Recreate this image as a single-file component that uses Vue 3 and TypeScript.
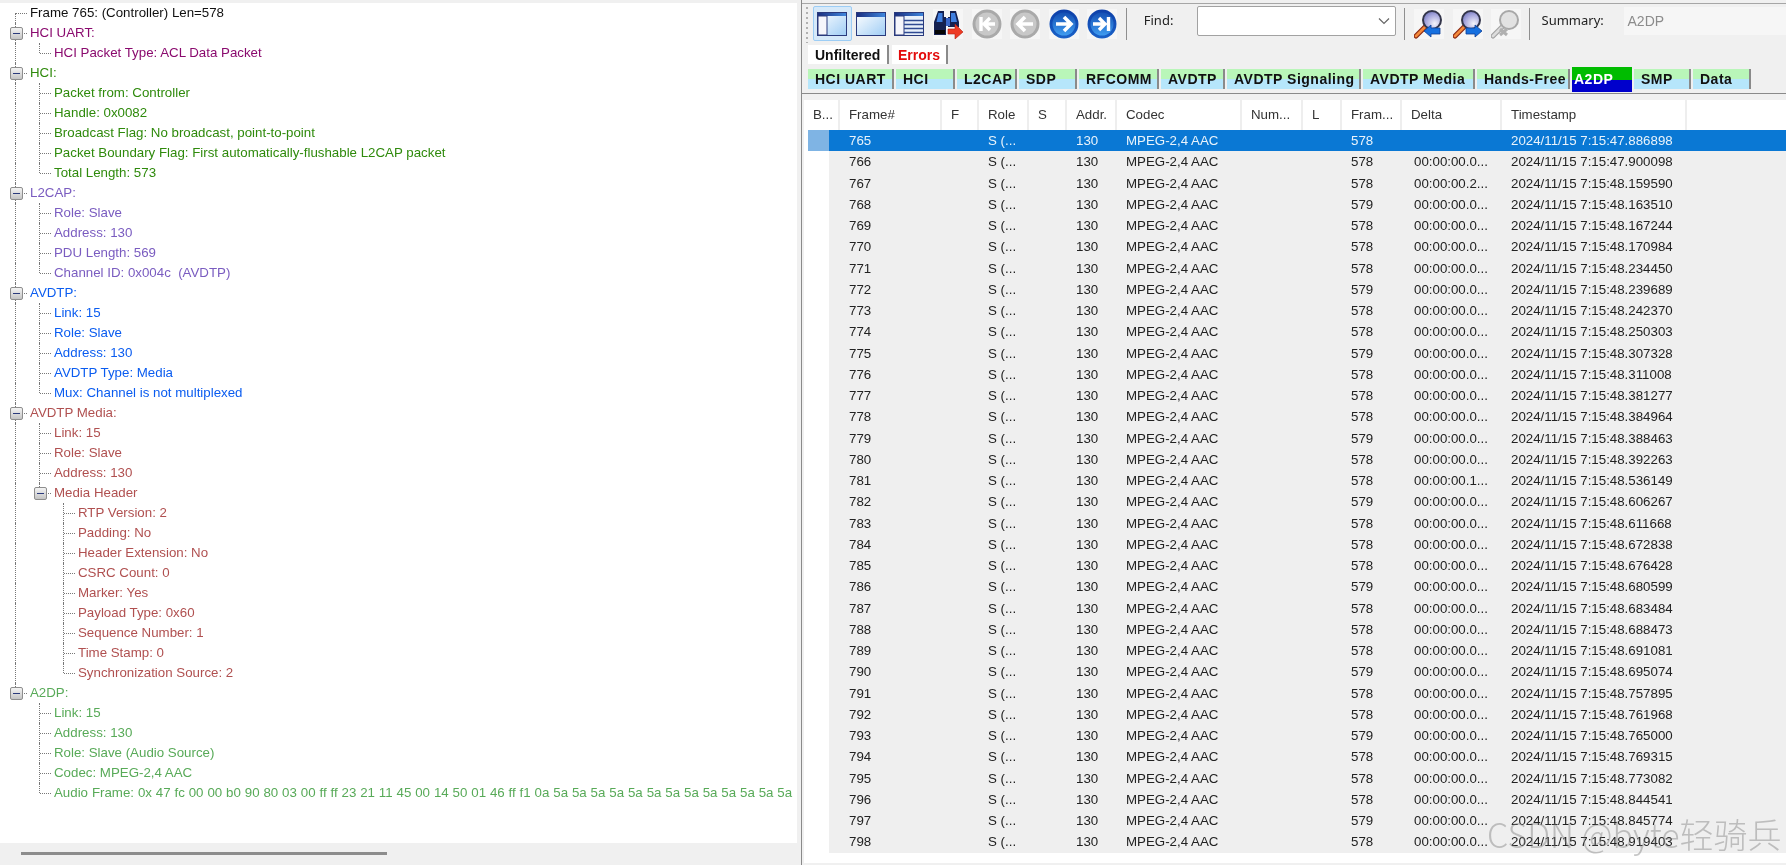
<script setup lang="ts">
interface TreeNode { t: string; children?: TreeNode[] }
interface Section { color: string; node: TreeNode }
interface Flat { t: string; color: string; guides: string[]; box: boolean }

const leaf = (...items: string[]): TreeNode[] => items.map((t) => ({ t }))

const sections: Section[] = [
  { color: '#111111', node: { t: 'Frame 765: (Controller) Len=578' } },
  { color: '#8a0a6e', node: { t: 'HCI UART:', children: leaf('HCI Packet Type: ACL Data Packet') } },
  { color: '#2f8a0c', node: { t: 'HCI:', children: leaf('Packet from: Controller', 'Handle: 0x0082', 'Broadcast Flag: No broadcast, point-to-point', 'Packet Boundary Flag: First automatically-flushable L2CAP packet', 'Total Length: 573') } },
  { color: '#7a5cc0', node: { t: 'L2CAP:', children: leaf('Role: Slave', 'Address: 130', 'PDU Length: 569', 'Channel ID: 0x004c  (AVDTP)') } },
  { color: '#0a5cf0', node: { t: 'AVDTP:', children: leaf('Link: 15', 'Role: Slave', 'Address: 130', 'AVDTP Type: Media', 'Mux: Channel is not multiplexed') } },
  { color: '#b05050', node: { t: 'AVDTP Media:', children: [
    ...leaf('Link: 15', 'Role: Slave', 'Address: 130'),
    { t: 'Media Header', children: leaf('RTP Version: 2', 'Padding: No', 'Header Extension: No', 'CSRC Count: 0', 'Marker: Yes', 'Payload Type: 0x60', 'Sequence Number: 1', 'Time Stamp: 0', 'Synchronization Source: 2') },
  ] } },
  { color: '#58aa58', node: { t: 'A2DP:', children: leaf('Link: 15', 'Address: 130', 'Role: Slave (Audio Source)', 'Codec: MPEG-2,4 AAC', 'Audio Frame: 0x 47 fc 00 00 b0 90 80 03 00 ff ff 23 21 11 45 00 14 50 01 46 ff f1 0a 5a 5a 5a 5a 5a 5a 5a 5a 5a 5a 5a 5a 5a') } },
]

const rows: Flat[] = []
function walk(n: TreeNode, color: string, prefix: boolean[], own: string) {
  rows.push({ t: n.t, color, guides: [...prefix.map((m) => (m ? 'pass' : 'none')), own], box: !!n.children })
  const kids = n.children ?? []
  const more = own === 'tee' || own === 'start'
  kids.forEach((k, i) => walk(k, color, [...prefix, more], i === kids.length - 1 ? 'ell' : 'tee'))
}
sections.forEach((s, i) => walk(s.node, s.color, [], i === 0 ? 'start' : i === sections.length - 1 ? 'ell' : 'tee'))

const topTabs = [
  { label: 'HCI UART', w: 86 }, { label: 'HCI', w: 59 }, { label: 'L2CAP', w: 60 }, { label: 'SDP', w: 58 },
  { label: 'RFCOMM', w: 80 }, { label: 'AVDTP', w: 64 }, { label: 'AVDTP Signaling', w: 134 }, { label: 'AVDTP Media', w: 112 },
  { label: 'Hands-Free', w: 93 }, { label: 'A2DP', w: 60, active: true }, { label: 'SMP', w: 57 }, { label: 'Data', w: 58 },
]

const cols = [
  { label: 'B...', w: 36 }, { label: 'Frame#', w: 102 }, { label: 'F', w: 37 }, { label: 'Role', w: 50 }, { label: 'S', w: 38 },
  { label: 'Addr.', w: 50 }, { label: 'Codec', w: 125 }, { label: 'Num...', w: 61 }, { label: 'L', w: 39 }, { label: 'Fram...', w: 60 },
  { label: 'Delta', w: 100 }, { label: 'Timestamp', w: 185 },
]

const raw: [number, string, string][] = [
  [578, '', '47.886898'], [578, '0', '47.900098'], [578, '2', '48.159590'], [579, '0', '48.163510'], [578, '0', '48.167244'],
  [578, '0', '48.170984'], [578, '0', '48.234450'], [579, '0', '48.239689'], [578, '0', '48.242370'], [578, '0', '48.250303'],
  [579, '0', '48.307328'], [578, '0', '48.311008'], [578, '0', '48.381277'], [578, '0', '48.384964'], [579, '0', '48.388463'],
  [578, '0', '48.392263'], [578, '1', '48.536149'], [579, '0', '48.606267'], [578, '0', '48.611668'], [578, '0', '48.672838'],
  [578, '0', '48.676428'], [579, '0', '48.680599'], [578, '0', '48.683484'], [578, '0', '48.688473'], [578, '0', '48.691081'],
  [579, '0', '48.695074'], [578, '0', '48.757895'], [578, '0', '48.761968'], [579, '0', '48.765000'], [578, '0', '48.769315'],
  [578, '0', '48.773082'], [578, '0', '48.844541'], [579, '0', '48.845774'], [578, '0', '48.919403'],
]
const frames = raw.map((r, i) => ({
  frame: 765 + i,
  len: r[0],
  delta: r[1] ? `00:00:00.${r[1]}...` : '',
  stamp: `2024/11/15 7:15:${r[2]}`,
}))
</script>

<template>
  <div class="app">
    <section class="left">
      <div class="tree">
        <div v-for="(r, i) in rows" :key="i" class="node" :style="{ color: r.color }">
          <span v-for="(g, j) in r.guides" :key="j" class="guide" :class="g">
            <span v-if="r.box && j === r.guides.length - 1" class="box"></span>
          </span>
          <span class="label" :class="{ hex: r.t.startsWith('Audio Frame') }">{{ r.t }}</span>
        </div>
      </div>
      <div class="hscroll"><div class="thumb"></div></div>
    </section>
    <div class="divider"></div>
    <section class="right">
      <div class="toolbar">
        <div class="grip"></div>
        <button class="tb on">
          <svg width="30" height="24" viewBox="0 0 30 24">
            <defs>
              <linearGradient id="pane" x1="0" y1="0" x2="1" y2="1"><stop offset="0" stop-color="#ffffff"/><stop offset="1" stop-color="#9fcdf5"/></linearGradient>
              <linearGradient id="bar" x1="0" y1="0" x2="1" y2="0"><stop offset="0" stop-color="#1a2f80"/><stop offset="1" stop-color="#3f86dc"/></linearGradient>
            </defs>
            <rect x="0.5" y="0.5" width="29" height="23" fill="url(#pane)" stroke="#2a3a7c"/>
            <rect x="1" y="1" width="28" height="3" fill="url(#bar)"/>
            <rect x="1" y="4" width="9" height="19" fill="#f6f6fb" stroke="#2a3a7c"/>
          </svg>
        </button>
        <button class="tb">
          <svg width="30" height="24" viewBox="0 0 30 24">
            <rect x="0.5" y="0.5" width="29" height="23" fill="url(#pane)" stroke="#2a3a7c"/>
            <rect x="1" y="1" width="28" height="4" fill="url(#bar)"/>
          </svg>
        </button>
        <button class="tb">
          <svg width="30" height="24" viewBox="0 0 30 24">
            <rect x="0.5" y="0.5" width="29" height="23" fill="#e8f0fa" stroke="#2a3a7c"/>
            <rect x="1" y="1" width="28" height="3" fill="url(#bar)"/>
            <rect x="1" y="4" width="9" height="19" fill="#f6f6fb" stroke="#2a3a7c"/>
            <path d="M10 8.5H29M10 12.5H29M10 16.5H29M10 20.5H29" stroke="#2f4a92" stroke-width="1.6"/>
          </svg>
        </button>
        <button class="tb">
          <svg class="tile" width="30" height="30" viewBox="0 0 30 30">
            <path d="M5 2h6v6h2v18H1V13z" fill="#15204f"/>
            <path d="M15 8h2V2h6l3 11v5H15z" fill="#15204f"/>
            <path d="M5.5 4h4v9h-6zM18 4h4l2 9h-6z" fill="#3f7fe0"/>
            <rect x="2" y="21" width="10" height="4" fill="#050505"/>
            <rect x="13" y="9" width="4" height="8" fill="#3a66c8"/>
            <path d="M15 20h7v-5l8 8-8 7v-5h-7z" fill="#ee3b24" stroke="#b02010" stroke-width=".6"/>
          </svg>
        </button>
        <button class="tb">
          <svg class="tile" width="30" height="30" viewBox="0 0 30 30">
            <circle cx="15" cy="15" r="14.5" fill="#a9a9a9"/><circle cx="15" cy="15" r="11.5" fill="#c8c8c8"/>
            <path d="M9 8v14M23 15H13M18 9l-6 6 6 6" fill="none" stroke="#fff" stroke-width="3.4"/>
          </svg>
        </button>
        <button class="tb">
          <svg class="tile" width="30" height="30" viewBox="0 0 30 30">
            <circle cx="15" cy="15" r="14.5" fill="#a9a9a9"/><circle cx="15" cy="15" r="11.5" fill="#c8c8c8"/>
            <path d="M23 15H9M15 8l-7 7 7 7" fill="none" stroke="#fff" stroke-width="3.6"/>
          </svg>
        </button>
        <button class="tb">
          <svg class="tile" width="30" height="30" viewBox="0 0 30 30">
            <defs>
              <linearGradient id="ring" x1="0" y1="0" x2="0" y2="1"><stop offset="0" stop-color="#0d3fa8"/><stop offset="1" stop-color="#1a62c8"/></linearGradient>
              <linearGradient id="core" x1="0" y1="0" x2="0" y2="1"><stop offset="0" stop-color="#1450b4"/><stop offset="1" stop-color="#3f9cf0"/></linearGradient>
            </defs>
            <circle cx="15" cy="15" r="14.5" fill="url(#ring)"/><circle cx="15" cy="15" r="11.5" fill="url(#core)"/>
            <path d="M7 15h14M15 8l7 7-7 7" fill="none" stroke="#fff" stroke-width="3.6"/>
          </svg>
        </button>
        <button class="tb">
          <svg class="tile" width="30" height="30" viewBox="0 0 30 30">
            <circle cx="15" cy="15" r="14.5" fill="url(#ring)"/><circle cx="15" cy="15" r="11.5" fill="url(#core)"/>
            <path d="M21.5 8v14M6 15h11M12 9l6 6-6 6" fill="none" stroke="#fff" stroke-width="3.4"/>
          </svg>
        </button>
        <div class="sep first"></div>
        <span class="tlabel find">Find:</span>
        <div class="combo">
          <svg width="12" height="8" viewBox="0 0 12 8"><path d="M1 1.5l5 5 5-5" fill="none" stroke="#666" stroke-width="1.2"/></svg>
        </div>
        <div class="sep second"></div>
        <button class="tb">
          <svg class="tile" width="30" height="30" viewBox="0 0 30 30">
            <defs>
              <radialGradient id="lens" cx=".65" cy=".7" r=".8"><stop offset="0" stop-color="#f4f4fb"/><stop offset=".6" stop-color="#a8a8de"/><stop offset="1" stop-color="#6c70b8"/></radialGradient>
            </defs>
            <path d="M12 17L2 27" stroke="#8c2a14" stroke-width="5" stroke-linecap="round"/>
            <path d="M12 17L2 27" stroke="#f48a3c" stroke-width="2.6" stroke-linecap="round"/>
            <circle cx="18" cy="11" r="9" fill="url(#lens)" stroke="#33354a" stroke-width="2"/>
            <path d="M10 22l7-6v3h9v6h-9v3z" fill="#1670e0" stroke="#0c3e96" stroke-width=".8"/>
          </svg>
        </button>
        <button class="tb">
          <svg class="tile" width="30" height="30" viewBox="0 0 30 30">
            <path d="M12 17L2 27" stroke="#8c2a14" stroke-width="5" stroke-linecap="round"/>
            <path d="M12 17L2 27" stroke="#f48a3c" stroke-width="2.6" stroke-linecap="round"/>
            <circle cx="18" cy="11" r="9" fill="url(#lens)" stroke="#33354a" stroke-width="2"/>
            <path d="M29 22l-7-6v3h-9v6h9v3z" fill="#1670e0" stroke="#0c3e96" stroke-width=".8"/>
          </svg>
        </button>
        <button class="tb">
          <svg class="tile" width="30" height="30" viewBox="0 0 30 30">
            <path d="M12 17L2 27" stroke="#a4a4a4" stroke-width="5" stroke-linecap="round"/>
            <path d="M12 17L2 27" stroke="#dcdcdc" stroke-width="2.6" stroke-linecap="round"/>
            <circle cx="18" cy="11" r="9" fill="#e2e2e2" stroke="#a8a8a8" stroke-width="2"/>
            <path d="M9 20l7 6M16 20l-7 6" stroke="#b0b0b0" stroke-width="3"/>
          </svg>
        </button>
        <div class="sep third"></div>
        <span class="tlabel summary">Summary:</span>
        <div class="sumbox">A2DP</div>
      </div>

      <div class="filters">
        <div class="ftab">Unfiltered</div>
        <div class="ftab err">Errors</div>
      </div>

      <div class="ptabs">
        <div v-for="t in topTabs" :key="t.label" class="ptab" :class="{ active: t.active }" :style="{ width: t.w + 'px' }">{{ t.label }}</div>
      </div>

      <div class="grid">
        <div class="head">
          <div v-for="c in cols" :key="c.label" class="hcell" :style="{ width: c.w + 'px' }">{{ c.label }}</div>
        </div>
        <div v-for="(f, i) in frames" :key="f.frame" class="row" :class="{ sel: i === 0 }">
          <div class="marker"></div>
          <div class="cells">
            <span class="c frame">{{ f.frame }}</span>
            <span class="c cf"></span>
            <span class="c role">S (...</span>
            <span class="c cs"></span>
            <span class="c addr">130</span>
            <span class="c codec">MPEG-2,4 AAC</span>
            <span class="c num"></span>
            <span class="c cl"></span>
            <span class="c flen">{{ f.len }}</span>
            <span class="c delta">{{ f.delta }}</span>
            <span class="c stamp">{{ f.stamp }}</span>
          </div>
        </div>
      </div>
    </section>
    <div class="watermark">CSDN @byte轻骑兵</div>
  </div>
</template>

<style>
html, body { margin: 0; background: #f0f0f0; overflow: hidden; }
</style>

<style scoped>
.app {
  position: relative;
  display: flex;
  width: 1786px;
  height: 865px;
  overflow: hidden;
  background: #f0f0f0;
  font-family: "Liberation Sans", Arial, sans-serif;
  font-size: 13.3px;
  color: #1c1c1c;
  filter: blur(0.4px);
}
.left { width: 797px; flex: none; display: flex; flex-direction: column; padding-top: 3px; box-sizing: border-box; }
.tree { flex: 1; background: #fff; overflow: hidden; }
.node { display: flex; height: 20px; line-height: 20px; white-space: nowrap; }
.label { margin-left: 3px; white-space: pre; }
.label.hex { word-spacing: 0.19px; }
.guide { position: relative; width: 24px; height: 20px; flex: none; }
.node .guide:first-child { margin-left: 3px; }
.guide.pass::before, .guide.tee::before, .guide.ell::before, .guide.start::before {
  content: ""; position: absolute; left: 12px; border-left: 1px dotted #777;
}
.guide.pass::before, .guide.tee::before { top: 0; bottom: 0; }
.guide.ell::before { top: 0; height: 10px; }
.guide.start::before { top: 10px; bottom: 0; }
.guide.tee::after, .guide.ell::after, .guide.start::after {
  content: ""; position: absolute; left: 13px; width: 11px; top: 10px; border-top: 1px dotted #777;
}
.box {
  position: absolute; z-index: 1; left: 7px; top: 4px; width: 11px; height: 11px;
  border: 1px solid #8e8e8e; border-radius: 2px; background: linear-gradient(#f4f4f4, #c4c4c4);
}
.box::after { content: ""; position: absolute; left: 2px; right: 2px; top: 5px; height: 1px; background: #2a3a7c; }
.hscroll { height: 22px; flex: none; padding-top: 9px; box-sizing: border-box; }
.thumb { width: 366px; height: 3px; margin-left: 21px; background: #8c8c8c; }
.divider { width: 4px; flex: none; border-right: 1px solid #8a8a8a; }
.right { flex: 1; min-width: 0; display: flex; flex-direction: column; padding-top: 3px; box-sizing: border-box; }
.toolbar { display: flex; height: 42px; flex: none; border-top: 1px solid #a6a6a6; padding-top: 2px; box-sizing: border-box; align-items: flex-start; }
.grip { width: 2px; height: 36px; margin: 1px 5px 0 4px; background: repeating-linear-gradient(#b0b0b0 0 2px, transparent 2px 5px); flex: none; }
.tb { width: 38.6px; height: 35px; flex: none; padding: 0; border: 1px solid transparent; background: transparent; display: flex; align-items: center; justify-content: center; box-sizing: border-box; }
.tb.on { border-color: #9ccdf5; background: #d6e9f9; border-radius: 2px; }
.tile { background: #f6f6f6; }
.sep { width: 1px; height: 32px; margin-top: 2px; background: #8f8f8f; flex: none; }
.sep.first { margin-left: 4px; }
.sep.second { margin-left: 8px; margin-right: 5px; }
.sep.third { margin-left: 3px; }
.tlabel { line-height: 28px; flex: none; color: #222; font-family: "Noto Sans", sans-serif; font-size: 13px; }
.find { margin-left: 17px; width: 53px; }
.combo { width: 199px; height: 30px; flex: none; box-sizing: border-box; background: #fff; border: 1px solid #a2a2a2; border-radius: 2px; display: flex; align-items: center; justify-content: flex-end; padding-right: 5px; }
.summary { margin-left: 12px; width: 82px; }
.sumbox { flex: 1; height: 28px; margin-top: 1px; line-height: 28px; padding-left: 4px; background: #f6f6f6; color: #8c8c8c; font-size: 14px; }
.filters { display: flex; height: 23px; flex: none; padding-left: 6px; box-sizing: border-box; gap: 3px; }
.ftab { height: 19px; line-height: 21px; padding: 0 7px; background: #fff; font-weight: 700; font-size: 14px; color: #111; border-right: 2px solid #8a8a8a; box-sizing: border-box; white-space: nowrap; }
.ftab:first-child { width: 81px; }
.ftab.err { width: 56px; color: #e30b0b; padding-left: 6px; }
.ptabs { display: flex; height: 25px; flex: none; padding-left: 6px; gap: 2px; border-bottom: 1px solid #8a8a8a; }
.ptab { height: 20px; margin-top: 1px; line-height: 20px; padding-left: 7px; box-sizing: border-box; border-right: 2px solid #8a8a8a; white-space: nowrap; font-weight: 700; font-size: 14px; letter-spacing: 0.5px; color: #111; background: linear-gradient(#b9f6b9 50%, #b6e6fb 50%); }
.ptab.active { height: 25px; margin-top: -1px; padding-left: 2px; border-right: 0; color: #fff; line-height: 24px; background: linear-gradient(#00bc00 50%, #0000cc 50%); }
.grid { flex: none; margin: 6px 0 10px 2px; background: #fff; height: 763px; overflow: hidden; }
.head { display: flex; height: 30px; }
.hcell { flex: none; box-sizing: border-box; line-height: 30px; padding-left: 9px; border-right: 2px solid #eeeeee; color: #333; white-space: nowrap; }
.row { display: flex; height: 21.25px; line-height: 22px; white-space: nowrap; padding-left: 4px; }
.marker { width: 21px; flex: none; }
.row.sel .marker { background: #7fb4e4; }
.cells { flex: 1; display: flex; background: #efefef; color: #222; }
.row.sel .cells { background: #0a78d4; color: #e9f3fb; }
.c { flex: none; box-sizing: border-box; padding-left: 9px; }
.frame { width: 113px; padding-left: 20px; }
.cf { width: 37px; }
.role { width: 50px; }
.cs { width: 38px; }
.addr { width: 50px; }
.codec { width: 125px; }
.num { width: 61px; }
.cl { width: 39px; }
.flen { width: 60px; }
.delta { width: 100px; padding-left: 12px; }
.stamp { width: 185px; }
.watermark {
  position: absolute; left: 1487px; top: 812px; white-space: nowrap;
  font-family: "Noto Sans CJK SC", "Noto Sans", sans-serif; font-weight: 300; font-size: 34px; line-height: 44px;
  color: rgba(120, 120, 120, 0.42);
}
</style>
